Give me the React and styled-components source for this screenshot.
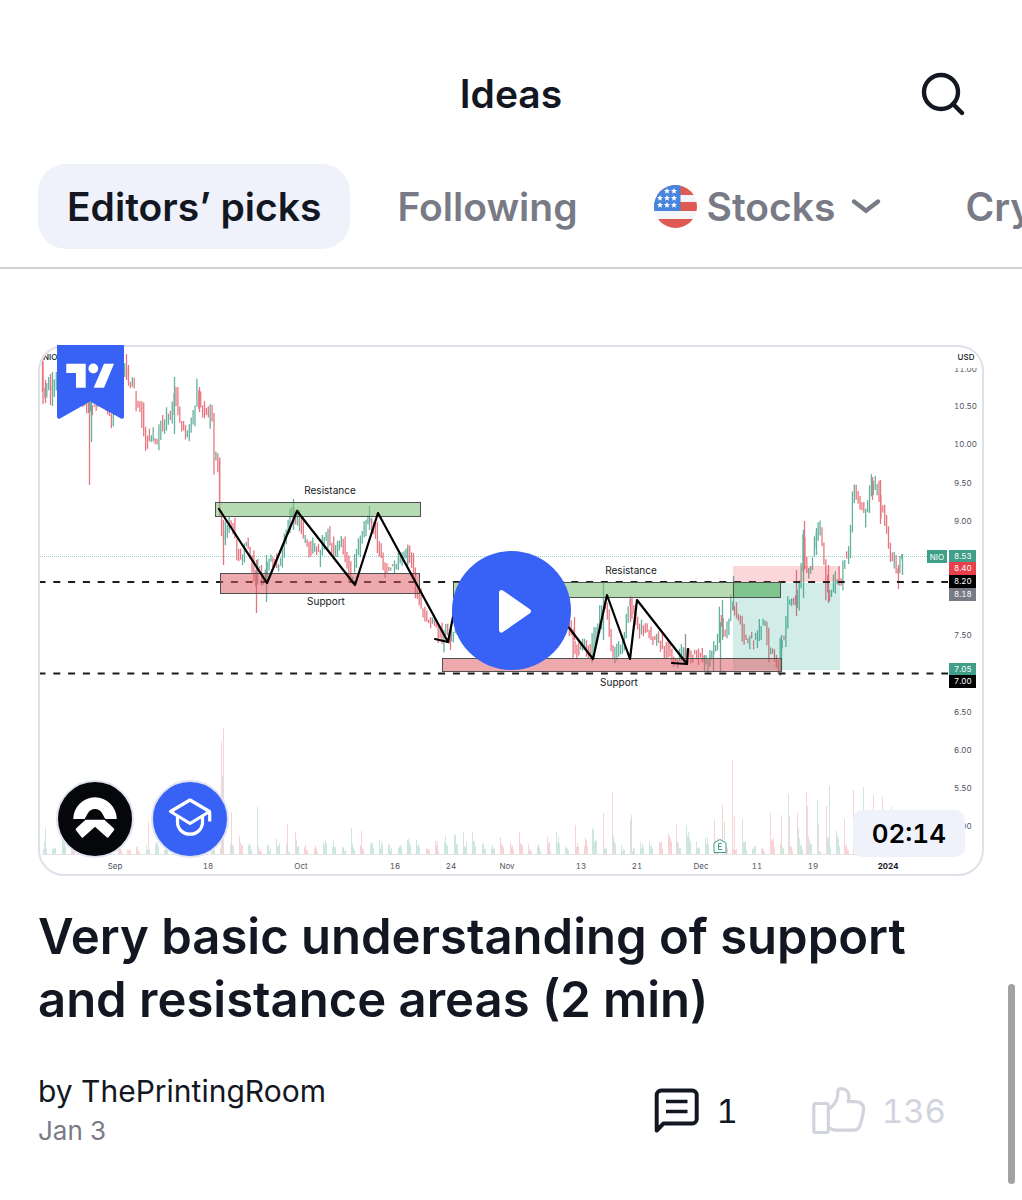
import styled, { createGlobalStyle } from "styled-components";

const UP = "#3f9f88";
const DOWN = "#e35561";

// mid points the candles follow, in chart coordinates
const pricePath = [
  [43, 370], [45, 398], [48, 390], [52, 385], [54, 390], [58, 372], [66, 380],
  [76, 392], [86, 400], [88, 412], [92, 408], [97, 408], [104, 402], [111, 414],
  [114, 420], [118, 398], [123, 384], [126, 366], [128, 372], [130, 381],
  [135, 382], [138, 400], [143, 406], [146, 440], [150, 443], [155, 439],
  [160, 443], [162, 422], [165, 430], [170, 418], [173, 422], [175, 390],
  [179, 399], [181, 420], [185, 428], [188, 438], [192, 425], [196, 415],
  [199, 390], [202, 402], [205, 413], [210, 418], [214, 414], [216, 462],
  [218, 455], [220, 470], [221, 510], [224, 542], [228, 532], [232, 524],
  [236, 532], [239, 556], [244, 560], [247, 538], [251, 553], [254, 560],
  [257, 590], [260, 568], [264, 575], [267, 576], [270, 562], [274, 560],
  [278, 568], [283, 562], [286, 540], [290, 522], [293, 506], [297, 525],
  [302, 515], [304, 538], [308, 538], [312, 553], [316, 545], [321, 555],
  [326, 539], [330, 536], [334, 550], [338, 546], [344, 543], [348, 560],
  [352, 580], [356, 572], [360, 545], [364, 532], [369, 518], [373, 520],
  [378, 525], [380, 550], [385, 562], [390, 567], [396, 567], [402, 559],
  [408, 555], [414, 560], [417, 590], [423, 608], [428, 622], [434, 622],
  [440, 630], [444, 640], [447, 624], [451, 636], [470, 620], [500, 600],
  [530, 615], [556, 600], [570, 622], [575, 644], [580, 652], [585, 648],
  [592, 655], [594, 640], [600, 625], [604, 604], [608, 602], [611, 630],
  [614, 653], [620, 652], [626, 643], [629, 610], [632, 605], [636, 616],
  [640, 632], [648, 629], [652, 640], [658, 640], [664, 645], [670, 655],
  [676, 661], [685, 655], [690, 654], [696, 652], [702, 657], [706, 662],
  [712, 658], [718, 648], [722, 612], [726, 638], [730, 625], [733, 600],
  [738, 613], [742, 622], [746, 638], [752, 636], [756, 642], [762, 626],
  [768, 622], [770, 652], [776, 655], [780, 670], [782, 640], [787, 640],
  [789, 604], [795, 600], [798, 609], [800, 592], [803, 568], [805, 536],
  [808, 574], [813, 566], [817, 542], [822, 533], [825, 552], [828, 590],
  [831, 598], [835, 590], [838, 578], [843, 586], [845, 560], [850, 560],
  [852, 530], [854, 502], [857, 492], [861, 505], [866, 514], [870, 501],
  [873, 485], [879, 485], [882, 508], [887, 518], [890, 542], [893, 561],
  [897, 562], [899, 582], [902, 560], [905, 558],
];

// long wicks: x, high, low, colour
const wicks = [
  [42, 353, 392, DOWN], [45, 380, 403, DOWN], [50, 374, 405, DOWN],
  [52, 372, 406, UP], [89, 400, 485, DOWN], [91, 400, 442, UP],
  [126, 354, 380, DOWN], [174, 377, 434, UP], [199, 387, 412, DOWN],
  [219, 460, 512, DOWN], [223, 520, 565, DOWN], [256, 560, 613, DOWN],
  [266, 555, 602, UP], [293, 499, 530, UP], [369, 506, 530, UP],
  [407, 547, 568, UP], [450, 630, 650, DOWN], [574, 617, 640, DOWN],
  [603, 582, 640, UP], [630, 596, 622, DOWN], [685, 634, 660, "#777"],
  [704, 655, 671, UP], [713, 650, 671, UP], [720, 622, 671, UP],
  [722, 600, 640, UP], [733, 576, 610, UP], [781, 635, 671, UP],
  [796, 570, 616, DOWN], [803, 530, 598, UP], [804, 521, 570, DOWN],
  [816, 528, 555, UP], [828, 565, 603, DOWN], [872, 477, 500, DOWN],
  [880, 480, 524, DOWN], [898, 565, 589, DOWN], [902, 554, 575, UP],
];

const volumeSpikes = [
  [45, 828], [148, 822], [221, 741], [222, 776], [223, 728], [231, 812],
  [257, 807], [287, 824], [295, 832], [351, 828], [361, 831], [575, 825],
  [592, 828], [603, 813], [612, 792], [630, 820], [631, 815], [676, 824],
  [686, 825], [714, 819], [722, 805], [724, 822], [732, 760], [734, 816],
  [742, 819], [770, 813], [781, 815], [788, 794], [789, 816], [797, 813],
  [798, 828], [806, 792], [807, 806], [817, 800], [818, 824], [826, 806],
  [829, 786], [844, 819], [853, 790], [863, 787], [873, 795], [882, 797],
  [891, 807],
];

const random = (seed) => {
  const value = Math.sin(seed * 12.9898) * 43758.5453;
  return value - Math.floor(value);
};

const priceAt = (x) => {
  const i = Math.max(1, pricePath.findIndex((point) => point[0] >= x));
  const [x0, y0] = pricePath[i - 1];
  const [x1, y1] = pricePath[i];
  return y0 + ((y1 - y0) * (x - x0)) / (x1 - x0);
};

const candles = [];
for (let x = 43; x <= 903; x += 1.9) {
  const from = priceAt(x);
  const to = priceAt(x + 2);
  const noise = (random(x) - 0.5) * 7;
  const rising = Math.abs(to - from) < 1.2 ? random(x + 3) > 0.5 : to < from;
  candles.push({
    x,
    top: Math.min(from, to) - 1 - random(x + 1) ** 2 * 11 + noise,
    bottom: Math.max(from, to) + 1 + random(x + 2) ** 2 * 11 + noise,
    color: rising ? UP : DOWN,
  });
}

const volumes = [];
for (let day = 0; day < 93; day++) {
  const start = Math.round(43 + day * 9.33);
  const base = 10 + random(day + 50) * 16;
  for (let i = 0; i < 4; i++) {
    volumes.push({
      x: start + i + 0.5,
      height: base * (1 - i * 0.15) * (0.4 + random(day * 7 + i) * 0.7),
      color: random(day * 5.3 + 1) > 0.5 ? UP : DOWN,
    });
  }
}

const priceTicks = [
  ["10.50", 406], ["10.00", 444], ["9.50", 483], ["9.00", 521], ["7.50", 635],
  ["6.50", 712], ["6.00", 750], ["5.50", 788], ["5.00", 826],
];

const dateTicks = [
  ["Sep", 115], ["18", 208], ["Oct", 301], ["16", 395], ["24", 451],
  ["Nov", 507], ["13", 581], ["21", 637], ["Dec", 701], ["11", 757], ["19", 813],
];

const priceTags = [
  ["8.53", 550, UP], ["8.40", 562, "#e8404b"], ["8.20", 575, "#000"],
  ["8.18", 588, "#787b86"], ["7.05", 663, UP], ["7.00", 675, "#000"],
];

const Chart = () => (
  <ChartSvg viewBox="40 347 942 527" role="img" aria-label="NIO price chart">
    <g strokeWidth="1" opacity="0.25">
      {volumes.map((bar, i) => (
        <line key={i} x1={bar.x} x2={bar.x} y1={855 - bar.height} y2="855" stroke={bar.color} />
      ))}
      {volumeSpikes.map(([x, y], i) => (
        <line key={i} x1={x + 0.5} x2={x + 0.5} y1={y} y2="855" stroke={i % 3 ? DOWN : UP} />
      ))}
      <line x1="42" x2="910" y1="854.5" y2="854.5" stroke="#999" />
    </g>

    <line x1="40" x2="927" y1="556.5" y2="556.5" stroke={UP} strokeDasharray="1 1" opacity="0.5" />

    <g strokeWidth="1.3" opacity="0.8">
      {candles.map((bar, i) => (
        <line key={i} x1={bar.x} x2={bar.x} y1={bar.top} y2={bar.bottom} stroke={bar.color} />
      ))}
      {wicks.map(([x, y1, y2, color], i) => (
        <line key={i} x1={x + 0.5} x2={x + 0.5} y1={y1} y2={y2} stroke={color} />
      ))}
    </g>

    <g stroke="#1c1c1c" strokeWidth="2" strokeDasharray="7 7.8" strokeDashoffset="1.5">
      <line x1="40" x2="948" y1="582" y2="582" />
      <line x1="40" x2="948" y1="673.5" y2="673.5" />
    </g>

    <rect x="733" y="566" width="107" height="16" fill="#f23645" opacity="0.2" />
    <rect x="733" y="583" width="107" height="87" fill="#089981" opacity="0.18" />
    <g stroke="#4c5250" strokeWidth="1">
      <rect x="215.5" y="502.5" width="205" height="14" fill="#81c07a" fillOpacity="0.58" />
      <rect x="220.5" y="573.5" width="199" height="20" fill="#de5a63" fillOpacity="0.52" />
      <rect x="453.5" y="582.5" width="327" height="15" fill="#81c07a" fillOpacity="0.58" />
      <rect x="733.5" y="582.5" width="47" height="15" fill="#4bb06a" fillOpacity="0.4" />
      <rect x="442.5" y="658.5" width="339" height="13" fill="#de5a63" fillOpacity="0.52" />
    </g>

    <g fill="none" stroke="#000" strokeWidth="2.2" strokeLinejoin="round" strokeLinecap="round">
      <path d="M219 509L267 583L297 511L355 585L378 513L448 642L454 612" />
      <path d="M435 639L448 642" />
      <path d="M560 616L593 659L607 595L630 659L637 600L687 664" />
      <path d="M672 663L687 664L688 649" />
    </g>

    <ChartNote x="330" y="494">Resistance</ChartNote>
    <ChartNote x="326" y="605">Support</ChartNote>
    <ChartNote x="631" y="574">Resistance</ChartNote>
    <ChartNote x="619" y="686">Support</ChartNote>

    <AxisText x="43" y="360" $strong $start>NIO</AxisText>
    <AxisText x="954" y="372" $start>11.00</AxisText>
    <rect x="951" y="349" width="30" height="19" fill="#fff" />
    <AxisText x="966" y="360" $strong>USD</AxisText>
    {priceTicks.map(([label, y]) => (
      <AxisText key={label} x="954" y={y + 3} $start>{label}</AxisText>
    ))}
    <AxisText x="42" y="869">2</AxisText>
    {dateTicks.map(([label, x]) => (
      <AxisText key={label} x={x} y="869">{label}</AxisText>
    ))}
    <AxisText x="888" y="869" $bold>2024</AxisText>

    <rect x="927" y="550" width="20" height="13" fill={UP} />
    <AxisText x="937" y="560" $light>NIO</AxisText>
    {priceTags.map(([label, y, color]) => (
      <g key={label}>
        <rect x="949" y={y} width="27" height="13" fill={color} />
        <AxisText x="954" y={y + 9} $light $start>{label}</AxisText>
      </g>
    ))}

    <path d="M714 852.5V843L720 839.5L726 843V852.5Z" fill="#fff" stroke={UP} />
    <path d="M722 843.5H718.5V849.5H722M718.5 846.5H721.5" fill="none" stroke={UP} />
  </ChartSvg>
);

const SearchIcon = () => (
  <svg width="44" height="44" viewBox="0 0 44 44" fill="none" stroke="#131722" strokeWidth="4.4">
    <circle cx="20" cy="20" r="17" />
    <path d="M32 32L41 41" strokeLinecap="round" />
  </svg>
);

const starRows = [[13, 6], [20, 6], [6, 13], [13, 13], [20, 13], [6, 20], [13, 20], [20, 20]];

const FlagIcon = () => (
  <svg width="43" height="43" viewBox="0 0 43 43">
    <clipPath id="flag">
      <circle cx="21.5" cy="21.5" r="21.5" />
    </clipPath>
    <g clipPath="url(#flag)">
      <rect width="43" height="43" fill="#f4f5f9" />
      <path d="M0 0H43V10H0ZM0 17H43V26H0ZM0 34H43V43H0Z" fill="#e05a54" />
      <rect width="26.5" height="26" fill="#4684dd" />
      {starRows.map(([x, y]) => (
        <path
          key={`${x}-${y}`}
          transform={`translate(${x} ${y})`}
          d="M0 -3L.9 -1L3 -.9L1.4 .6L1.9 2.7L0 1.6L-1.9 2.7L-1.4 .6L-3 -.9L-.9 -1Z"
          fill="#fff"
        />
      ))}
    </g>
  </svg>
);

const ChevronIcon = () => (
  <svg width="30" height="18" viewBox="0 0 30 18" fill="none" stroke="currentColor" strokeWidth="4.4">
    <path d="M3 3.5L15 12.8L27 3.5" strokeLinecap="round" />
  </svg>
);

const BookmarkIcon = () => (
  <svg width="67" height="74" viewBox="0 0 67 74">
    <path d="M0 0H67V72Q66.5 74.5 64 73.5L33 56.5L3 73.5Q.5 74.5 0 72Z" fill="#3861f6" />
    <g fill="#fff">
      <path d="M9.3 18.7H28.7V42.7H19V28H9.3Z" />
      <circle cx="36.3" cy="23.5" r="4.9" />
      <path d="M47 18.7H57L47 42.7H36.7Z" />
    </g>
  </svg>
);

const NioIcon = () => (
  <svg width="50" height="50" viewBox="-25 -25 50 50" fill="#fff">
    <path d="M-21.7 0A21.7 21.7 0 0 1 21.7 0H10.5C8 -3 7 -10 0 -10S-8 -3 -10.5 0Z" />
    <path d="M-9.5 .8H9.3L19 9.5Q19.7 10.3 19 11.2L13.5 18.2Q12.8 19 12 18.4L0 7.8L-12 18.4Q-12.8 19 -13.5 18.2L-19 11.2Q-19.7 10.3 -19 9.5Z" />
  </svg>
);

const CapIcon = () => (
  <svg width="50" height="50" viewBox="-25 -25 50 50" fill="none" stroke="#fff" strokeWidth="3.2">
    <path d="M0 -19L19.5 -7.5L0 4.5L-19.5 -7.5Z" strokeLinejoin="round" />
    <path d="M19.7 -7V2.5" />
    <path d="M-12.5 -3V3C-12.5 10 -7 15.2 0 15.2S12.5 10 12.5 3V-3" />
  </svg>
);

const PlayIcon = () => (
  <svg width="50" height="50" viewBox="-25 -25 50 50">
    <path d="M-9.5 -18.5L17.5 .2L-9.5 19Z" fill="#fff" stroke="#fff" strokeWidth="5" strokeLinejoin="round" />
  </svg>
);

const CommentIcon = () => (
  <svg width="46" height="46" viewBox="0 0 46 46" fill="none" stroke="#131722" strokeWidth="4">
    <path d="M2.7 42.5V7A4.5 4.5 0 0 1 7.2 2.5H38.2A4.5 4.5 0 0 1 42.7 7V31A4.5 4.5 0 0 1 38.2 35.5H9.5L2.7 42.5Z" strokeLinejoin="round" />
    <path d="M12 13.5H33.5M12 23.5H33.5" strokeWidth="3.6" />
  </svg>
);

const LikeIcon = () => (
  <svg width="54" height="48" viewBox="0 0 54 48" fill="none" stroke="currentColor" strokeWidth="3.2" strokeLinejoin="round">
    <rect x="1.8" y="16.5" width="14.5" height="29" rx="2" />
    <path d="M16.5 22C20 20.5 22.5 17 24.5 13C26 10 25.7 8 25.7 5.5C25.7 3 27 1.7 29.5 1.7C34 2 37 5 37 9.5C37 11.5 36.5 13 36 14.7H43.5C49 14.7 52.3 18 51.5 23.5C50.8 29 49.5 34 48 38.5C46.5 42 45 43.2 42 43.2H24C20.5 43.2 19 41.5 16.5 40.5" />
  </svg>
);

const App = () => {
  return (
    <Page>
      <GlobalStyle />
      <Header>
        <PageTitle>Ideas</PageTitle>
        <SearchButton aria-label="Search">
          <SearchIcon />
        </SearchButton>
      </Header>
      <Tabs>
        <Tab $active>Editors’ picks</Tab>
        <Tab>Following</Tab>
        <Tab aria-haspopup="listbox">
          <FlagIcon />
          Stocks
          <Chevron>
            <ChevronIcon />
          </Chevron>
        </Tab>
        <Tab>Crypto</Tab>
      </Tabs>
      <Main>
        <article>
          <Preview>
            <Chart />
            <Bookmark>
              <BookmarkIcon />
            </Bookmark>
            <PlayButton aria-label="Play video">
              <PlayIcon />
            </PlayButton>
            <Badges>
              <Badge $color="#06070b">
                <NioIcon />
              </Badge>
              <Badge $color="#3861f6">
                <CapIcon />
              </Badge>
            </Badges>
            <Duration>02:14</Duration>
          </Preview>
          <IdeaTitle>Very basic understanding of support and resistance areas (2 min)</IdeaTitle>
          <Meta>
            <div>
              <Author>by ThePrintingRoom</Author>
              <Posted>Jan 3</Posted>
            </div>
            <Stats>
              <StatButton aria-label="1 comment">
                <CommentIcon />
                <span>1</span>
              </StatButton>
              <StatButton $muted aria-label="136 likes">
                <LikeIcon />
                <span>136</span>
              </StatButton>
            </Stats>
          </Meta>
        </article>
      </Main>
      <ScrollThumb />
    </Page>
  );
};

export default App;

const GlobalStyle = createGlobalStyle`
  * {
    box-sizing: border-box;
  }

  body {
    margin: 0;
    background: #fff;
    color: #131722;
    font-family: Inter, "Liberation Sans", sans-serif;
  }

  button {
    padding: 0;
    border: none;
    background: none;
    color: inherit;
    font: inherit;
    cursor: pointer;
  }

  svg {
    display: block;
    flex-shrink: 0;
  }
`;

const Page = styled.div`
  min-height: 100vh;
  overflow: hidden;
`;

const Header = styled.header`
  display: grid;
  grid-template-columns: 1fr auto 1fr;
  align-items: center;
  padding: 64px 57px 40px;
`;

const PageTitle = styled.h1`
  grid-column: 2;
  margin: 0;
  font-size: 39px;
  line-height: 60px;
  font-weight: 600;
`;

const SearchButton = styled.button`
  justify-self: end;
`;

const Tabs = styled.nav`
  display: flex;
  gap: 18px;
  padding: 0 0 18px 38px;
  border-bottom: 2px solid #d1d1d4;
  overflow: hidden;
`;

const Tab = styled.button`
  display: flex;
  flex-shrink: 0;
  align-items: center;
  gap: 10px;
  height: 85px;
  && {
    padding: 0 29px;
  }
  border-radius: 28px;
  background: ${({ $active }) => ($active ? "#eff2fa" : "none")};
  color: ${({ $active }) => ($active ? "#131722" : "#787b86")};
  font-size: 39px;
  font-weight: 600;
  white-space: nowrap;
`;

const Chevron = styled.span`
  margin: 0 8px 0 6px;
`;

const Main = styled.main`
  padding: 76px 38px 40px;
`;

const Preview = styled.div`
  position: relative;
`;

const ChartSvg = styled.svg`
  width: 100%;
  border: 2px solid #dfe0ea;
  border-radius: 26px;
`;

const ChartNote = styled.text`
  fill: #131722;
  font-size: 10px;
  text-anchor: middle;
`;

const AxisText = styled.text`
  fill: ${({ $light, $strong, $bold }) => ($light ? "#fff" : $strong || $bold ? "#131722" : "#50535e")};
  font-size: 8px;
  font-weight: ${({ $strong, $bold }) => ($bold ? 700 : $strong ? 500 : 400)};
  font-variant-numeric: tabular-nums;
  text-anchor: ${({ $start }) => ($start ? "start" : "middle")};
`;

const Bookmark = styled.div`
  position: absolute;
  top: 0;
  left: 19px;
`;

const PlayButton = styled.button`
  position: absolute;
  inset: 0;
  display: grid;
  place-items: center;
  width: 119px;
  height: 119px;
  margin: auto;
  && {
    background: #3861f6;
  }
  border-radius: 50%;
`;

const Badges = styled.div`
  position: absolute;
  bottom: 18px;
  left: 18px;
  display: flex;
  gap: 17px;
`;

const Badge = styled.span`
  display: grid;
  place-items: center;
  width: 78px;
  height: 78px;
  border: 2px solid #dfe3f2;
  border-radius: 50%;
  background: ${({ $color }) => $color};
`;

const Duration = styled.span`
  position: absolute;
  right: 19px;
  bottom: 19px;
  padding: 0 19px;
  border-radius: 10px;
  background: #eff2fa;
  color: #000;
  font-size: 26px;
  line-height: 47px;
  font-weight: 600;
  font-variant-numeric: tabular-nums;
`;

const IdeaTitle = styled.h2`
  margin: 29px 0 40px;
  font-size: 49px;
  line-height: 63px;
  font-weight: 600;
`;

const Meta = styled.div`
  display: flex;
  justify-content: space-between;
  align-items: center;
`;

const Author = styled.div`
  font-size: 30px;
  line-height: 40px;
`;

const Posted = styled.div`
  color: #787b86;
  font-size: 26px;
  line-height: 40px;
`;

const Stats = styled.div`
  display: flex;
  gap: 74px;
  padding-right: 38px;
`;

const StatButton = styled.button`
  display: flex;
  align-items: center;
  gap: 16px;
  && {
    color: ${({ $muted }) => ($muted ? "#d1d4dc" : "#131722")};
  }
  font-size: 33px;
  font-variant-numeric: tabular-nums;
`;

const ScrollThumb = styled.div`
  position: fixed;
  right: 7px;
  bottom: 16px;
  width: 7px;
  height: 200px;
  border-radius: 4px;
  background: #a2a2a2;
`;
